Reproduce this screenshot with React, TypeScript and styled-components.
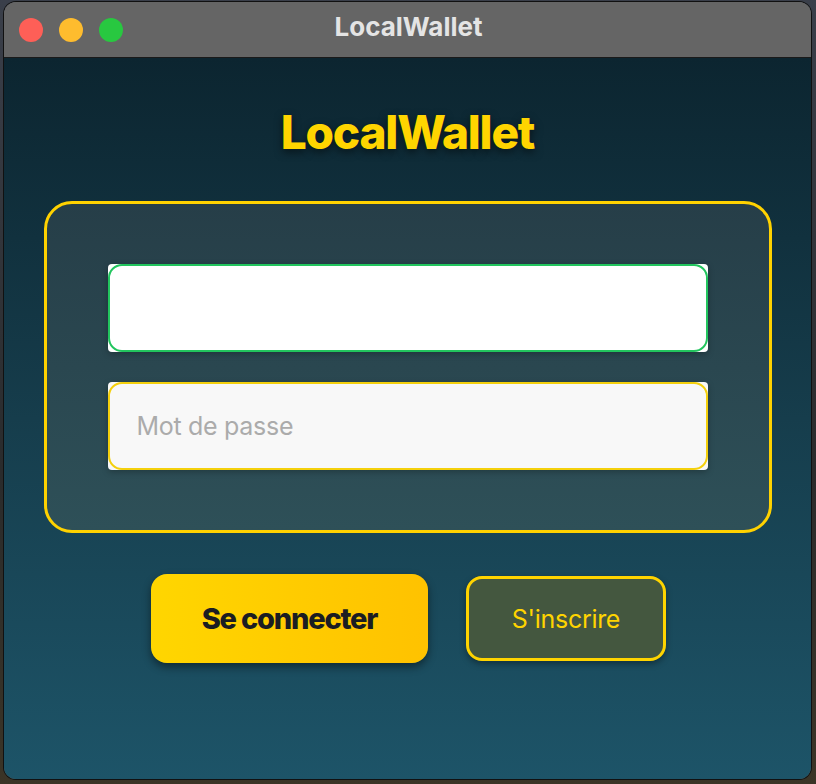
import React from "react";
import styled, { createGlobalStyle } from "styled-components";

const Global = createGlobalStyle`
  html, body { margin: 0; padding: 0; }
  body {
    background: #2b2d30;
    font-family: Inter, "Noto Sans", sans-serif;
    width: 816px;
    height: 784px;
    overflow: hidden;
  }
`;

const Desk = styled.div`
  width: 816px;
  height: 784px;
  padding: 2px 5px 5px 4px;
  box-sizing: border-box;
  background: linear-gradient(180deg, #3a3f4a 0%, #2a2b2c 60%, #3b3426 100%);
`;

const Window = styled.div`
  height: 777px;
  border-radius: 12px;
  overflow: hidden;
  display: flex;
  flex-direction: column;
  box-shadow: 0 0 0 1px #111, inset 0 0 0 1px rgba(255,255,255,0.18);
`;

const TitleBar = styled.div`
  height: 56px;
  flex: none;
  background: #656565;
  border-bottom: 1px solid #1a1a1a;
  box-sizing: border-box;
  position: relative;
  display: flex;
  align-items: center;
  justify-content: center;
`;

const Lights = styled.div`
  position: absolute;
  left: 15px;
  top: 16px;
  display: flex;
  gap: 16px;
`;

const Light = styled.span<{ $c: string }>`
  width: 24px;
  height: 24px;
  border-radius: 50%;
  background: ${(p) => p.$c};
`;

const TitleText = styled.div`
  color: #e4e4e4;
  font-weight: 700;
  font-size: 26px;
  letter-spacing: 0;
  margin-top: -7px;
  margin-left: 2px;
`;

const Content = styled.div`
  flex: 1;
  background: linear-gradient(180deg, #0c2530 0%, #163d4c 50%, #1d5468 100%);
  display: flex;
  flex-direction: column;
  align-items: center;
`;

const Heading = styled.h1`
  margin: 46px 0 0;
  color: #ffd500;
  font-size: 46px;
  font-weight: 800;
  letter-spacing: -1.2px;
  line-height: 56px;
  text-shadow: 0 3px 8px rgba(0, 0, 0, 0.55);
`;

const Card = styled.div`
  margin-top: 41px;
  width: 728px;
  height: 332px;
  box-sizing: border-box;
  border: 3.5px solid #ffd200;
  border-radius: 28px;
  background: linear-gradient(180deg, #263e48 0%, #2e5058 100%);
  display: flex;
  flex-direction: column;
  align-items: center;
  padding-top: 60px;
  gap: 30px;
`;

const Field = styled.div<{ $bg: string }>`
  width: 600px;
  height: 88px;
  background: ${(p) => p.$bg};
  border-radius: 4px;
  box-shadow: 0 2px 6px rgba(0, 0, 0, 0.25);
`;

const FieldInner = styled.div<{ $border: string }>`
  height: 100%;
  box-sizing: border-box;
  border: 2.5px solid ${(p) => p.$border};
  border-radius: 14px;
  display: flex;
  align-items: center;
  padding-left: 27px;
  color: #ababab;
  font-size: 25px;
  letter-spacing: -0.3px;
`;

const Buttons = styled.div`
  margin-top: 41px;
  display: flex;
  gap: 38px;
  align-items: center;
  margin-left: 2px;
`;

const Primary = styled.button`
  width: 277px;
  height: 89px;
  border: none;
  border-radius: 16px;
  background: linear-gradient(90deg, #ffd600 0%, #ffc200 100%);
  color: #1b1d22;
  font-family: Inter, sans-serif;
  font-size: 29px;
  font-weight: 800;
  letter-spacing: -1.2px;
  box-shadow: 0 4px 8px rgba(0, 0, 0, 0.45);
`;

const Secondary = styled.button`
  width: 200px;
  height: 85px;
  box-sizing: border-box;
  border: 3.5px solid #ffd400;
  border-radius: 16px;
  background: #44573f;
  color: #ffd400;
  font-family: Inter, sans-serif;
  font-size: 25px;
  font-weight: 400;
  letter-spacing: -0.3px;
  box-shadow: 0 3px 6px rgba(0, 0, 0, 0.35);
`;

export default function App() {
  return (
    <>
      <Global />
      <Desk>
        <Window>
          <TitleBar>
            <Lights>
              <Light $c="#fe5f57" />
              <Light $c="#febc2e" />
              <Light $c="#28c840" />
            </Lights>
            <TitleText>LocalWallet</TitleText>
          </TitleBar>
          <Content>
            <Heading>LocalWallet</Heading>
            <Card>
              <Field $bg="#ffffff">
                <FieldInner $border="#22c55e" />
              </Field>
              <Field $bg="#f8f8f8">
                <FieldInner $border="#f4d00c">Mot de passe</FieldInner>
              </Field>
            </Card>
            <Buttons>
              <Primary>Se connecter</Primary>
              <Secondary>S'inscrire</Secondary>
            </Buttons>
          </Content>
        </Window>
      </Desk>
    </>
  );
}
